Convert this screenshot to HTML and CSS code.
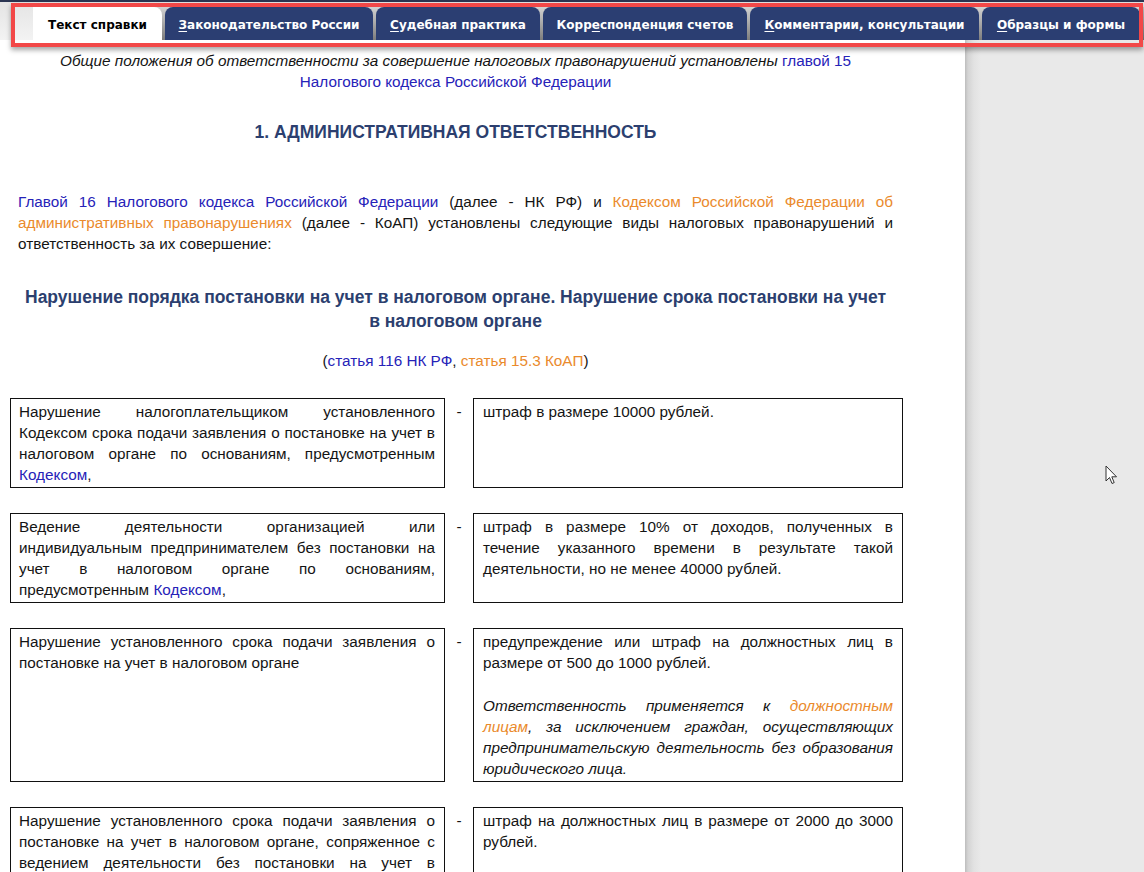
FILE: index.html
```html
<!DOCTYPE html>
<html lang="ru">
<head>
<meta charset="utf-8">
<title>Текст справки</title>
<link rel="stylesheet" href="styles.css">
</head>
<body>
<header class="tabbar">
  <nav class="tabs">
    <a class="tab active t1">Текст справки</a>
    <a class="tab t2"><u>З</u>аконодательство России</a>
    <a class="tab t3"><u>С</u>удебная практика</a>
    <a class="tab t4">Корр<u>е</u>спонденция счетов</a>
    <a class="tab t5"><u>К</u>омментарии, консультации</a>
    <a class="tab t6"><u>О</u>бразцы и формы</a>
  </nav>
</header>
<div class="page">
  <main class="doc">
    <p class="intro"><i>Общие положения об ответственности за совершение налоговых правонарушений установлены</i> <a class="lnk">главой 15 Налогового кодекса Российской Федерации</a></p>
    <h1 class="h-section">1. АДМИНИСТРАТИВНАЯ ОТВЕТСТВЕННОСТЬ</h1>
    <p class="text"><a class="lnk">Главой 16 Налогового кодекса Российской Федерации</a> (далее - НК РФ) и <a class="lnk-o">Кодексом Российской Федерации об административных правонарушениях</a> (далее - КоАП) установлены следующие виды налоговых правонарушений и ответственность за их совершение:</p>
    <h2 class="h-topic">Нарушение порядка постановки на учет в налоговом органе. Нарушение срока постановки на учет в налоговом органе</h2>
    <p class="refs">(<a class="lnk">статья 116 НК РФ</a>, <a class="lnk-o">статья 15.3 КоАП</a>)</p>

    <div class="grid">
      <div class="cell">Нарушение налогоплательщиком установленного Кодексом срока подачи заявления о постановке на учет в налоговом органе по основаниям, предусмотренным <a class="lnk">Кодексом</a>,</div>
      <div class="dash">-</div>
      <div class="cell rc">штраф в размере 10000 рублей.</div>

      <div class="cell">Ведение деятельности организацией или индивидуальным предпринимателем без постановки на учет в налоговом органе по основаниям, предусмотренным <a class="lnk">Кодексом</a>,</div>
      <div class="dash">-</div>
      <div class="cell rc">штраф в размере 10% от доходов, полученных в течение&nbsp;указанного времени в результате такой деятельности, но не менее 40000 рублей.</div>

      <div class="cell">Нарушение установленного срока подачи заявления о постановке на учет в налоговом органе</div>
      <div class="dash">-</div>
      <div class="cell rc"><p class="cp">предупреждение или штраф на должностных лиц в размере от 500 до 1000 рублей.</p><p class="cp note">Ответственность применяется к <a class="lnk-o">должностным лицам</a>, за исключением граждан, осуществляющих предпринимательскую деятельность без образования юридического лица.</p></div>

      <div class="cell">Нарушение установленного срока подачи заявления о постановке на учет в налоговом органе, сопряженное с ведением деятельности без постановки на учет в налоговом органе более 90 календарных дней,</div>
      <div class="dash">-</div>
      <div class="cell rc">штраф на должностных лиц в размере от 2000 до 3000 рублей.</div>
    </div>
  </main>
  <aside class="side"></aside>
</div>
<div class="mark"></div>
<svg class="cursor" width="13" height="21" viewBox="0 0 13 21"><path d="M1 1 L1 16 L4.5 12.5 L7 18.5 L9.2 17.6 L6.8 11.8 L11.5 11.8 Z" fill="#fff" stroke="#333" stroke-width="1" stroke-linejoin="round"/></svg>
</body>
</html>
```
FILE: styles.css
```css
* { box-sizing: border-box; }
html, body { margin: 0; padding: 0; }
body {
  background: #e9e9e9;
  font-family: "Liberation Sans", Arial, sans-serif;
  font-size: 15.3px;
  color: #141414;
  position: relative;
  min-height: 872px;
}
.tabbar {
  height: 40px;
  background: linear-gradient(#2b3552 0, #2b3552 2px, #e4e4e4 2px, #f3f3f3 100%);
  padding-left: 33px;
  display: flex;
  align-items: flex-end;
}
.tabs {
  display: flex;
  height: 33px;
  background: linear-gradient(#d2d2d2, #7d7d7d);
}
.tab {
  display: flex;
  align-items: center;
  justify-content: center;
  height: 33px;
  padding-top: 2px;
  margin-right: 3px;
  background: #2b3e72;
  color: #fff;
  font-family: "DejaVu Sans", Verdana, sans-serif;
  font-weight: bold;
  font-size: 12px;
  border-radius: 8px 8px 0 0;
  white-space: nowrap;
}
.t1 { width: 129px; }
.t2 { width: 208px; }
.t3 { width: 164px; }
.t4 { width: 204px; }
.t5 { width: 229px; }
.t6 { width: 158px; margin-right: 4px; }
.tab u { text-decoration-thickness: 1px; text-underline-offset: 2px; }
.tab.active {
  background: #fff;
  color: #000;
  border-radius: 0 8px 0 0;
}
.page {
  display: flex;
  min-height: 832px;
}
.doc {
  width: 965px;
  background: #fff;
  padding: 10px 72px 40px 18px;
}
.side {
  flex: 1;
  background: linear-gradient(to right, #bdbdbd 0, #d4d4d4 3px, #e2e2e2 9px, #e9e9e9 16px);
}
.intro {
  margin: 0;
  text-align: center;
  line-height: 21px;
}
.lnk { color: #2622b8; text-decoration: none; }
.lnk-o { color: #ea8a2c; text-decoration: none; }
.h-section {
  margin: 30px 0 0;
  font-size: 17.5px;
  line-height: 21px;
  text-align: center;
  color: #2c3f6f;
}
.text {
  margin: 48px 0 0;
  line-height: 21px;
  text-align: justify;
}
.h-topic {
  margin: 31px 0 0;
  font-size: 17.5px;
  line-height: 24px;
  text-align: center;
  color: #2c3f6f;
}
.refs {
  margin: 17px 0 0;
  text-align: center;
  line-height: 21px;
}
.grid {
  margin: 27px 0 0 -8px;
  display: grid;
  grid-template-columns: 435px 28px 430px;
  row-gap: 25px;
  line-height: 21px;
}
.cell {
  border: 1px solid #111;
  padding: 2px 9px 2px 8px;
  text-align: justify;
}
.rc { padding-left: 9px; padding-right: 9px; }
.dash {
  text-align: center;
  padding-top: 3px;
}
.cp { margin: 0; }
.cp + .cp { margin-top: 22px; }
.note { font-style: italic; }
.mark {
  position: absolute;
  left: 11px;
  top: 3px;
  width: 1132px;
  height: 44px;
  border: 4px solid #f24848;
  box-shadow: 0 3px 5px rgba(0,0,0,0.35);
  pointer-events: none;
}
.cursor {
  position: absolute;
  left: 1105px;
  top: 465px;
}
```
